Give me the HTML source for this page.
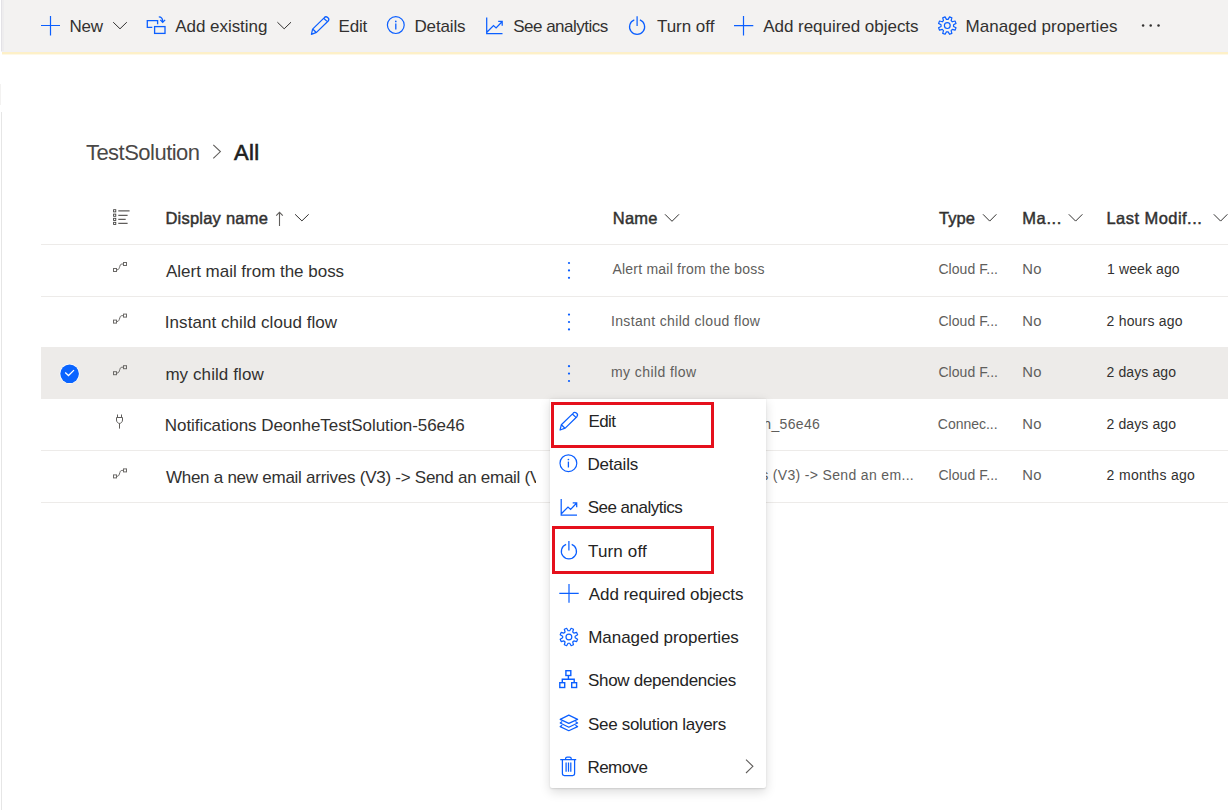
<!DOCTYPE html>
<html><head><meta charset="utf-8"><style>
*{margin:0;padding:0;box-sizing:border-box}
html,body{width:1228px;height:810px;overflow:hidden;background:#fff;font-family:"Liberation Sans",sans-serif;position:relative}
.a{position:absolute;white-space:nowrap}
</style></head><body>
<div style="position:absolute;left:1px;top:0;width:1227px;height:52px;background:#f3f2f1"></div>
<div style="position:absolute;left:1px;top:0;width:1px;height:52px;background:#e3e2e6"></div>
<div style="position:absolute;left:2px;top:0;width:2px;height:52px;background:#eeedee"></div>
<div style="position:absolute;left:1px;top:51px;width:1227px;height:1px;background:#f1f0f4"></div>
<div style="position:absolute;left:2px;top:52px;width:1226px;height:2px;background:#fdf0c8"></div><div style="position:absolute;left:2px;top:54px;width:1226px;height:1px;background:#fef8e6"></div>
<div style="position:absolute;left:0;top:84px;width:1px;height:21px;background:#f3f2f1"></div>
<div style="position:absolute;left:1px;top:112px;width:1px;height:698px;background:#e6e6e6"></div>
<div style="position:absolute;left:41px;top:244px;width:1187px;height:1px;background:#edebe9"></div>
<div style="position:absolute;left:41px;top:296px;width:1187px;height:1px;background:#edebe9"></div>
<div style="position:absolute;left:41px;top:450px;width:1187px;height:1px;background:#edebe9"></div>
<div style="position:absolute;left:41px;top:502px;width:1187px;height:1px;background:#edebe9"></div>
<div style="position:absolute;left:41px;top:347px;width:1187px;height:52px;background:#edebe9"></div>
<span class="a m" id="tb_new" style="left:69.56px;top:16.01px;font-size:17px;line-height:21px;letter-spacing:-0.253px;color:#323130;font-weight:400">New</span>
<span class="a m" id="tb_add" style="left:175.29px;top:16.01px;font-size:17px;line-height:21px;letter-spacing:-0.046px;color:#323130;font-weight:400">Add existing</span>
<span class="a m" id="tb_edit" style="left:338.46px;top:16.01px;font-size:17px;line-height:21px;letter-spacing:-0.164px;color:#323130;font-weight:400">Edit</span>
<span class="a m" id="tb_det" style="left:414.49px;top:16.01px;font-size:17px;line-height:21px;letter-spacing:-0.159px;color:#323130;font-weight:400">Details</span>
<span class="a m" id="tb_ana" style="left:513.27px;top:16.01px;font-size:17px;line-height:21px;letter-spacing:-0.517px;color:#323130;font-weight:400">See analytics</span>
<span class="a m" id="tb_off" style="left:656.96px;top:16.01px;font-size:17px;line-height:21px;letter-spacing:-0.028px;color:#323130;font-weight:400">Turn off</span>
<span class="a m" id="tb_req" style="left:763.23px;top:16.01px;font-size:17px;line-height:21px;letter-spacing:-0.032px;color:#323130;font-weight:400">Add required objects</span>
<span class="a m" id="tb_man" style="left:965.59px;top:16.01px;font-size:17px;line-height:21px;letter-spacing:0.038px;color:#323130;font-weight:400">Managed properties</span>
<span class="a m" id="bc_ts" style="left:85.92px;top:139.01px;font-size:22px;line-height:28px;letter-spacing:-0.519px;color:#4a4847;font-weight:400">TestSolution</span>
<span class="a m" id="bc_all" style="left:234.07px;top:139.01px;font-size:22px;line-height:28px;letter-spacing:0.315px;color:#201f1e;font-weight:400;-webkit-text-stroke:0.6px #201f1e">All</span>
<span class="a m" id="h_dn" style="left:165.43px;top:208.31px;font-size:16.5px;line-height:21px;letter-spacing:0.222px;color:#323130;font-weight:400;-webkit-text-stroke:0.45px #323130">Display name</span>
<span class="a m" id="h_nm" style="left:612.72px;top:208.31px;font-size:16.5px;line-height:21px;letter-spacing:0.259px;color:#323130;font-weight:400;-webkit-text-stroke:0.45px #323130">Name</span>
<span class="a m" id="h_ty" style="left:938.93px;top:208.31px;font-size:16.5px;line-height:21px;letter-spacing:0.045px;color:#323130;font-weight:400;-webkit-text-stroke:0.45px #323130">Type</span>
<span class="a m" id="h_ma" style="left:1022.26px;top:208.31px;font-size:16.5px;line-height:21px;letter-spacing:0.611px;color:#323130;font-weight:400;-webkit-text-stroke:0.45px #323130">Ma...</span>
<span class="a m" id="h_lm" style="left:1106.43px;top:208.31px;font-size:16.5px;line-height:21px;letter-spacing:0.457px;color:#323130;font-weight:400;-webkit-text-stroke:0.45px #323130">Last Modif...</span>
<span class="a m" id="r1" style="left:166.04px;top:261.01px;font-size:17px;line-height:21px;letter-spacing:-0.021px;color:#323130;font-weight:400">Alert mail from the boss</span>
<span class="a m" id="r2" style="left:164.83px;top:312.01px;font-size:17px;line-height:21px;letter-spacing:0.055px;color:#323130;font-weight:400">Instant child cloud flow</span>
<span class="a m" id="r3" style="left:165.38px;top:364.01px;font-size:17px;line-height:21px;letter-spacing:0.085px;color:#323130;font-weight:400">my child flow</span>
<span class="a m" id="r4" style="left:164.82px;top:415.01px;font-size:17px;line-height:21px;letter-spacing:-0.066px;color:#323130;font-weight:400">Notifications DeonheTestSolution-56e46</span>
<div style="position:absolute;left:0;top:0;width:536px;height:810px;overflow:hidden"><span class="a m" id="r5" style="left:165.94px;top:467.01px;font-size:17px;line-height:21px;letter-spacing:-0.260px;color:#323130;font-weight:400">When a new email arrives (V3) -&gt; Send an email (V</span></div>
<span class="a m" id="n1" style="left:612.38px;top:260.01px;font-size:14px;line-height:18px;letter-spacing:0.224px;color:#605e5c;font-weight:400">Alert mail from the boss</span>
<span class="a m" id="n2" style="left:610.96px;top:311.51px;font-size:14px;line-height:18px;letter-spacing:0.352px;color:#605e5c;font-weight:400">Instant child cloud flow</span>
<span class="a m" id="n3" style="left:610.90px;top:363.01px;font-size:14px;line-height:18px;letter-spacing:0.430px;color:#605e5c;font-weight:400">my child flow</span>
<div style="position:absolute;left:600px;top:400px;width:628px;height:110px;overflow:hidden"><div style="position:absolute;left:-600px;top:-400px"><span class="a m" id="n4" style="left:543.26px;top:414.51px;font-size:14px;line-height:18px;letter-spacing:0.335px;color:#605e5c;font-weight:400">Notifications_DeonheTestSolutionh_56e46</span></div></div>
<div style="position:absolute;left:600px;top:400px;width:628px;height:110px;overflow:hidden"><div style="position:absolute;left:-600px;top:-400px"><span class="a m" id="n5" style="left:599.49px;top:466.01px;font-size:14px;line-height:18px;letter-spacing:0.335px;color:#605e5c;font-weight:400">When a new email arrives (V3) -&gt; Send an em...</span></div></div>
<span class="a m" id="t1" style="left:938.43px;top:260.01px;font-size:14px;line-height:18px;letter-spacing:0.044px;color:#605e5c;font-weight:400">Cloud F...</span>
<span class="a m" id="t2" style="left:938.43px;top:311.51px;font-size:14px;line-height:18px;letter-spacing:0.044px;color:#605e5c;font-weight:400">Cloud F...</span>
<span class="a m" id="t3" style="left:938.43px;top:363.01px;font-size:14px;line-height:18px;letter-spacing:0.044px;color:#605e5c;font-weight:400">Cloud F...</span>
<span class="a m" id="t4" style="left:937.81px;top:414.51px;font-size:14px;line-height:18px;letter-spacing:-0.024px;color:#605e5c;font-weight:400">Connec...</span>
<span class="a m" id="t5" style="left:938.43px;top:466.01px;font-size:14px;line-height:18px;letter-spacing:0.044px;color:#605e5c;font-weight:400">Cloud F...</span>
<span class="a m" id="m1" style="left:1022.25px;top:260.01px;font-size:14.8px;line-height:18px;letter-spacing:0.328px;color:#605e5c;font-weight:400">No</span>
<span class="a m" id="m2" style="left:1022.25px;top:311.51px;font-size:14.8px;line-height:18px;letter-spacing:0.328px;color:#605e5c;font-weight:400">No</span>
<span class="a m" id="m3" style="left:1022.25px;top:363.01px;font-size:14.8px;line-height:18px;letter-spacing:0.328px;color:#605e5c;font-weight:400">No</span>
<span class="a m" id="m4" style="left:1022.25px;top:414.51px;font-size:14.8px;line-height:18px;letter-spacing:0.328px;color:#605e5c;font-weight:400">No</span>
<span class="a m" id="m5" style="left:1022.25px;top:466.01px;font-size:14.8px;line-height:18px;letter-spacing:0.328px;color:#605e5c;font-weight:400">No</span>
<span class="a m" id="d1" style="left:1107.07px;top:260.01px;font-size:14px;line-height:18px;letter-spacing:0.108px;color:#323130;font-weight:400">1 week ago</span>
<span class="a m" id="d2" style="left:1106.62px;top:311.51px;font-size:14px;line-height:18px;letter-spacing:0.189px;color:#323130;font-weight:400">2 hours ago</span>
<span class="a m" id="d3" style="left:1106.62px;top:363.01px;font-size:14px;line-height:18px;letter-spacing:0.090px;color:#323130;font-weight:400">2 days ago</span>
<span class="a m" id="d4" style="left:1106.62px;top:414.51px;font-size:14px;line-height:18px;letter-spacing:0.090px;color:#323130;font-weight:400">2 days ago</span>
<span class="a m" id="d5" style="left:1106.62px;top:466.01px;font-size:14px;line-height:18px;letter-spacing:0.312px;color:#323130;font-weight:400">2 months ago</span>
<svg width="1228" height="810" viewBox="0 0 1228 810" style="position:absolute;left:0;top:0" fill="none"><path d="M50.5 16V35.5M41 25.5H60" stroke="#0b5fff" stroke-width="1.2"/><path d="M152.3 27.3H147.3V20.6H157.6V24.2" stroke="#0b5fff" stroke-width="1.3"/><rect x="154.6" y="26.6" width="10.4" height="6.8" stroke="#0b5fff" stroke-width="1.3"/><path d="M158.8 16.9C161.5 16.9 162.7 18.5 162.7 21.8M160.3 19.9L162.7 22.4L165.1 19.9" stroke="#0b5fff" stroke-width="1.3"/><path transform="translate(311.3 34.3)" d="M1.3 -5.2L12.8 -16.4A2.2 2.2 0 0 1 16.9 -13.3L5.2 -1.9L0.1 0L1.3 -5.2ZM1.9 -4.8L4.7 -2M12.3 -16L16.3 -12.4" stroke="#0b5fff" stroke-width="1.25" stroke-linejoin="round"/><circle cx="395.8" cy="25.1" r="8.4" stroke="#0b5fff" stroke-width="1.2"/><path d="M395.8 23.5V29.400000000000002" stroke="#0b5fff" stroke-width="1.3"/><circle cx="395.8" cy="21.400000000000002" r="0.85" fill="#0b5fff"/><path transform="translate(486.2 17.1)" d="M0.5 0.5V16.6H16.3M0.9 14.9L7.3 8.4L9.9 10.8L15.8 4.6M12 4.3H16V8.6" stroke="#0b5fff" stroke-width="1.25" stroke-linejoin="miter"/><path d="M634.3000000000001 19.8A7.55 7.55 0 1 0 639.9 19.8M637.1 16.3V25.900000000000002" stroke="#0b5fff" stroke-width="1.25"/><path d="M743.5 16V35.5M734 25.6H753.3" stroke="#0b5fff" stroke-width="1.2"/><path d="M948.14 19.36 L949.54 16.88 L951.88 17.85 L951.12 20.59 L952.31 21.78 L955.05 21.02 L956.02 23.36 L953.54 24.76 L953.54 26.44 L956.02 27.84 L955.05 30.18 L952.31 29.42 L951.12 30.61 L951.88 33.35 L949.54 34.32 L948.14 31.84 L946.46 31.84 L945.06 34.32 L942.72 33.35 L943.48 30.61 L942.29 29.42 L939.55 30.18 L938.58 27.84 L941.06 26.44 L941.06 24.76 L938.58 23.36 L939.55 21.02 L942.29 21.78 L943.48 20.59 L942.72 17.85 L945.06 16.88 L946.46 19.36Z" stroke="#0b5fff" stroke-width="1.2" stroke-linejoin="round"/><circle cx="947.3" cy="25.6" r="2.9" stroke="#0b5fff" stroke-width="1.2"/><circle cx="1143.1" cy="25.6" r="1.25" fill="#323130"/><circle cx="1150.7" cy="25.6" r="1.25" fill="#323130"/><circle cx="1158.5" cy="25.6" r="1.25" fill="#323130"/><path d="M113.2 22.2L120.0 28.799999999999997L126.8 22.2" stroke="#323130" stroke-width="1.0"/><path d="M277.4 22.2L284.2 28.799999999999997L291.0 22.2" stroke="#323130" stroke-width="1.0"/><path d="M213.3 144.8L220.4 151.6L213.3 158.4" stroke="#605e5c" stroke-width="1.1"/><g stroke="#3b3a39" stroke-width="0.85"><rect x="113.6" y="209.70000000000002" width="2.2" height="2.2"/><rect x="113.6" y="214.1" width="2.2" height="2.2"/><rect x="113.6" y="218.3" width="2.2" height="2.2"/><rect x="113.6" y="222.3" width="2.2" height="2.2"/></g><path d="M118.3 210.8H129.6M118.3 215.3H127.6M118.3 219.4H125.7M118.3 223.4H127.6" stroke="#605e5c" stroke-width="1.2"/><path d="M279.5 212.3V226M276.2 215.6L279.5 212.3L282.8 215.6" stroke="#605e5c" stroke-width="1.1"/><path d="M295.1 214.3L301.90000000000003 220.9L308.70000000000005 214.3" stroke="#323130" stroke-width="1.0"/><path d="M665.0 214.3L672.0 221.3L679.0 214.3" stroke="#323130" stroke-width="1.0"/><path d="M983.0 214.3L989.7 221.10000000000002L996.4 214.3" stroke="#323130" stroke-width="1.0"/><path d="M1068.8 214.3L1075.6 221.10000000000002L1082.3999999999999 214.3" stroke="#323130" stroke-width="1.0"/><path d="M1213.8 214.3L1220.6 221.10000000000002L1227.3999999999999 214.3" stroke="#323130" stroke-width="1.0"/><g transform="translate(113 262)" stroke="#6b6967" stroke-width="1"><rect x="0.5" y="6.5" width="3" height="3"/><rect x="10.5" y="0.5" width="3" height="3"/><path d="M3.5 8L5.2 7.6C6.2 7 6.6 4.6 7.3 3C7.7 2.2 8.3 2 10.5 2"/></g><g transform="translate(113 313.6)" stroke="#6b6967" stroke-width="1"><rect x="0.5" y="6.5" width="3" height="3"/><rect x="10.5" y="0.5" width="3" height="3"/><path d="M3.5 8L5.2 7.6C6.2 7 6.6 4.6 7.3 3C7.7 2.2 8.3 2 10.5 2"/></g><g transform="translate(113 365.2)" stroke="#6b6967" stroke-width="1"><rect x="0.5" y="6.5" width="3" height="3"/><rect x="10.5" y="0.5" width="3" height="3"/><path d="M3.5 8L5.2 7.6C6.2 7 6.6 4.6 7.3 3C7.7 2.2 8.3 2 10.5 2"/></g><g transform="translate(113 468.4)" stroke="#6b6967" stroke-width="1"><rect x="0.5" y="6.5" width="3" height="3"/><rect x="10.5" y="0.5" width="3" height="3"/><path d="M3.5 8L5.2 7.6C6.2 7 6.6 4.6 7.3 3C7.7 2.2 8.3 2 10.5 2"/></g><g stroke="#605e5c" stroke-width="1" fill="none"><path d="M117.5 414.5V417.5M121.5 414.5V417.5M116.5 417.5H122.5V420C122.5 422 121 423.4 119.5 423.4C118 423.4 116.5 422 116.5 420Z M119.5 423.4V428.6"/></g><circle cx="569" cy="263" r="1.1" fill="#0b5fff"/><circle cx="569" cy="270.4" r="1.1" fill="#0b5fff"/><circle cx="569" cy="277.8" r="1.1" fill="#0b5fff"/><circle cx="569" cy="314.6" r="1.1" fill="#0b5fff"/><circle cx="569" cy="322.0" r="1.1" fill="#0b5fff"/><circle cx="569" cy="329.40000000000003" r="1.1" fill="#0b5fff"/><circle cx="569" cy="366.2" r="1.1" fill="#0b5fff"/><circle cx="569" cy="373.59999999999997" r="1.1" fill="#0b5fff"/><circle cx="569" cy="381.0" r="1.1" fill="#0b5fff"/><circle cx="569" cy="417.8" r="1.1" fill="#0b5fff"/><circle cx="569" cy="425.2" r="1.1" fill="#0b5fff"/><circle cx="569" cy="432.6" r="1.1" fill="#0b5fff"/><circle cx="569" cy="469.4" r="1.1" fill="#0b5fff"/><circle cx="569" cy="476.79999999999995" r="1.1" fill="#0b5fff"/><circle cx="569" cy="484.2" r="1.1" fill="#0b5fff"/><circle cx="69.6" cy="373.8" r="10" fill="#ffffff"/><circle cx="69.6" cy="373.8" r="9.3" fill="#0a64ff"/><path d="M65.2 372.5L68.5 375.5L74 370.1" stroke="#fff" stroke-width="1.3"/></svg>
<div style="position:absolute;left:550px;top:399px;width:216px;height:389px;background:#fff;border-radius:0 0 2px 2px;box-shadow:0 3.2px 11px rgba(0,0,0,.14),0 0.6px 1.8px rgba(0,0,0,.11)"></div>
<span class="a m" id="mi1" style="left:588.55px;top:411.01px;font-size:17px;line-height:21px;letter-spacing:-0.629px;color:#242424;font-weight:400">Edit</span>
<span class="a m" id="mi2" style="left:587.49px;top:454.01px;font-size:17px;line-height:21px;letter-spacing:-0.194px;color:#242424;font-weight:400">Details</span>
<span class="a m" id="mi3" style="left:587.63px;top:497.22px;font-size:17px;line-height:21px;letter-spacing:-0.504px;color:#242424;font-weight:400">See analytics</span>
<span class="a m" id="mi4" style="left:588.03px;top:540.61px;font-size:17px;line-height:21px;letter-spacing:0.145px;color:#242424;font-weight:400">Turn off</span>
<span class="a m" id="mi5" style="left:588.81px;top:583.81px;font-size:17px;line-height:21px;letter-spacing:-0.066px;color:#242424;font-weight:400">Add required objects</span>
<span class="a m" id="mi6" style="left:588.20px;top:627.22px;font-size:17px;line-height:21px;letter-spacing:-0.031px;color:#242424;font-weight:400">Managed properties</span>
<span class="a m" id="mi7" style="left:588.03px;top:670.40px;font-size:17px;line-height:21px;letter-spacing:-0.306px;color:#242424;font-weight:400">Show dependencies</span>
<span class="a m" id="mi8" style="left:588.03px;top:713.61px;font-size:17px;line-height:21px;letter-spacing:-0.304px;color:#242424;font-weight:400">See solution layers</span>
<span class="a m" id="mi9" style="left:587.55px;top:756.81px;font-size:17px;line-height:21px;letter-spacing:-0.597px;color:#242424;font-weight:400">Remove</span>
<svg width="1228" height="810" viewBox="0 0 1228 810" style="position:absolute;left:0;top:0" fill="none"><path transform="translate(560 430)" d="M1.3 -5.2L12.8 -16.4A2.2 2.2 0 0 1 16.9 -13.3L5.2 -1.9L0.1 0L1.3 -5.2ZM1.9 -4.8L4.7 -2M12.3 -16L16.3 -12.4" stroke="#0b5fff" stroke-width="1.25" stroke-linejoin="round"/><circle cx="568.4" cy="463.2" r="8.4" stroke="#0b5fff" stroke-width="1.2"/><path d="M568.4 461.59999999999997V467.5" stroke="#0b5fff" stroke-width="1.3"/><circle cx="568.4" cy="459.5" r="0.85" fill="#0b5fff"/><path transform="translate(560.7 498.6)" d="M0.5 0.5V16.6H16.3M0.9 14.9L7.3 8.4L9.9 10.8L15.8 4.6M12 4.3H16V8.6" stroke="#0b5fff" stroke-width="1.25"/><path d="M566.1 544.4A7.55 7.55 0 1 0 571.6999999999999 544.4M568.9 540.9V550.5" stroke="#0b5fff" stroke-width="1.25"/><path d="M569 584V602.7M559.3 593.3H578.7" stroke="#0b5fff" stroke-width="1.2"/><path d="M569.74 630.76 L571.14 628.28 L573.48 629.25 L572.72 631.99 L573.91 633.18 L576.65 632.42 L577.62 634.76 L575.14 636.16 L575.14 637.84 L577.62 639.24 L576.65 641.58 L573.91 640.82 L572.72 642.01 L573.48 644.75 L571.14 645.72 L569.74 643.24 L568.06 643.24 L566.66 645.72 L564.32 644.75 L565.08 642.01 L563.89 640.82 L561.15 641.58 L560.18 639.24 L562.66 637.84 L562.66 636.16 L560.18 634.76 L561.15 632.42 L563.89 633.18 L565.08 631.99 L564.32 629.25 L566.66 628.28 L568.06 630.76Z" stroke="#0b5fff" stroke-width="1.2" stroke-linejoin="round"/><circle cx="568.9" cy="637.0" r="2.9" stroke="#0b5fff" stroke-width="1.2"/><g stroke="#0b5fff" stroke-width="1.4"><rect x="565.9" y="670.7" width="4.9" height="4.8"/><rect x="559.8" y="682.7" width="4.9" height="4.8"/><rect x="571.7" y="682.7" width="4.9" height="4.8"/><path d="M568.4 675.5V679.3M562.3 682.7V679.3H574.2V682.7"/></g><g stroke="#0b5fff" stroke-width="1.2" stroke-linejoin="round"><path d="M568.8 715.1L577.6 719.4L568.8 723.4L560.2 719.4Z"/><path d="M562.2 721.6L560.2 723L568.8 727.2L577.6 723L575.4 721.6"/><path d="M562.2 725.3L560.2 726.6L568.8 730.7L577.6 726.6L575.4 725.3"/></g><g stroke="#0b5fff" stroke-width="1.25"><path d="M560.2 759.5H576.2M565.6 759.5V758.6C565.6 757.6 566.2 757.1 567.2 757.1H569.6C570.6 757.1 571.2 757.6 571.2 758.6V759.5"/><path d="M562.4 759.5V773.6C562.4 774.7 563.2 775.5 564.3 775.5H572.7C573.8 775.5 574.6 774.7 574.6 773.6V759.5"/><path d="M566.1 762.4V771.7M568.5 762.4V771.7M570.8 762.4V771.7"/></g><path d="M746 759.6L752.9 766.3L746 773" stroke="#605e5c" stroke-width="1.1"/></svg>
<div style="position:absolute;left:551px;top:402px;width:163px;height:46px;border:3px solid #e5101c"></div>
<div style="position:absolute;left:552px;top:526px;width:162px;height:48px;border:3px solid #e5101c"></div>
</body></html>
